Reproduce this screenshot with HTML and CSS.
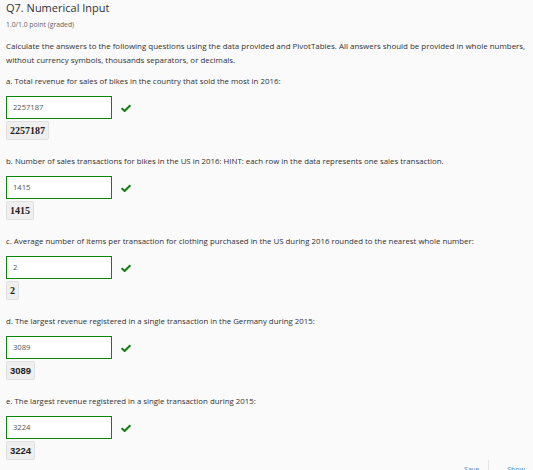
FILE: index.html
```html
<!DOCTYPE html>
<html>
<head>
<meta charset="utf-8">
<link rel="stylesheet" href="styles.css">
</head>
<body>
<div class="problem">
  <h3 class="title">Q7. Numerical Input</h3>
  <div class="points">1.0/1.0 point (graded)</div>
  <p class="intro">Calculate the answers to the following questions using the data provided and PivotTables. All answers should be provided in whole numbers, without currency symbols, thousands separators, or decimals.</p>

  <div class="question">
    <p class="label">a. Total revenue for sales of bikes in the country that sold the most in 2016:</p>
    <div class="row">
      <div class="input">2257187</div>
      <svg class="check" width="10" height="8" viewBox="0 0 10 8"><path d="M0.6 4.2 L3.6 7 L9.4 1.2" fill="none" stroke="#0a7d0a" stroke-width="2"/></svg>
    </div>
    <div class="answer">2257187</div>
  </div>

  <div class="question">
    <p class="label">b. Number of sales transactions for bikes in the US in 2016: HINT: each row in the data represents one sales transaction.</p>
    <div class="row">
      <div class="input">1415</div>
      <svg class="check" width="10" height="8" viewBox="0 0 10 8"><path d="M0.6 4.2 L3.6 7 L9.4 1.2" fill="none" stroke="#0a7d0a" stroke-width="2"/></svg>
    </div>
    <div class="answer">1415</div>
  </div>

  <div class="question">
    <p class="label">c. Average number of items per transaction for clothing purchased in the US during 2016 rounded to the nearest whole number:</p>
    <div class="row">
      <div class="input">2</div>
      <svg class="check" width="10" height="8" viewBox="0 0 10 8"><path d="M0.6 4.2 L3.6 7 L9.4 1.2" fill="none" stroke="#0a7d0a" stroke-width="2"/></svg>
    </div>
    <div class="answer">2</div>
  </div>

  <div class="question">
    <p class="label">d. The largest revenue registered in a single transaction in the Germany during 2015:</p>
    <div class="row">
      <div class="input">3089</div>
      <svg class="check" width="10" height="8" viewBox="0 0 10 8"><path d="M0.6 4.2 L3.6 7 L9.4 1.2" fill="none" stroke="#0a7d0a" stroke-width="2"/></svg>
    </div>
    <div class="answer sans">3089</div>
  </div>

  <div class="question">
    <p class="label">e. The largest revenue registered in a single transaction during 2015:</p>
    <div class="row">
      <div class="input">3224</div>
      <svg class="check" width="10" height="8" viewBox="0 0 10 8"><path d="M0.6 4.2 L3.6 7 L9.4 1.2" fill="none" stroke="#0a7d0a" stroke-width="2"/></svg>
    </div>
    <div class="answer sans">3224</div>
  </div>

  <div class="actions">
    <span class="action">Save</span>
    <span class="divider"></span>
    <span class="action">Show</span>
  </div>
</div>
</body>
</html>
```
FILE: styles.css
```css
html, body {
  margin: 0;
  padding: 0;
  background: #fafafa;
}
body {
  font-family: "Open Sans", sans-serif;
  color: #313131;
  height: 470px;
  overflow: hidden;
}
.problem {
  padding: 0 2px 0 6px;
}
.title {
  margin: 0;
  font-size: 11px;
  font-weight: 400;
  line-height: 16px;
  color: #313131;
}
.points {
  margin-top: 4px;
  font-size: 6.8px;
  line-height: 10px;
  color: #646464;
}
.intro {
  margin: 9px 0 0;
  font-size: 7.95px;
  line-height: 14px;
}
.question {
  display: flex;
  flex-direction: column;
  align-items: flex-start;
  margin-top: 8px;
}
.question + .question {
  margin-top: 15px;
}
.label {
  margin: 0;
  font-size: 7.85px;
  line-height: 12px;
}
.row {
  margin-top: 9px;
  display: flex;
  align-items: center;
}
.input {
  box-sizing: border-box;
  width: 106px;
  height: 23px;
  border: 1px solid #0b850b;
  background: #fff;
  font-size: 7.6px;
  line-height: 21px;
  padding-left: 6px;
  color: #555;
}
.check {
  margin-left: 9px;
}
.answer {
  box-sizing: border-box;
  margin-top: 2px;
  height: 19px;
  padding: 0 3px;
  border: 1px solid #e0e0e0;
  border-radius: 2px;
  background: #efefef;
  font-family: "Liberation Serif", serif;
  font-weight: 700;
  font-size: 10px;
  line-height: 17px;
  color: #222;
}
.answer.sans {
  font-family: "Liberation Sans", sans-serif;
  font-size: 9.5px;
}
.actions {
  display: flex;
  justify-content: flex-end;
  height: 20px;
  padding-right: 6px;
  font-size: 7px;
  color: #4a8fc0;
}
.action {
  padding-top: 5px;
  line-height: 10px;
}
.divider {
  width: 1px;
  background: #e4e4e4;
  margin: 0 18px 0 9px;
}
```
